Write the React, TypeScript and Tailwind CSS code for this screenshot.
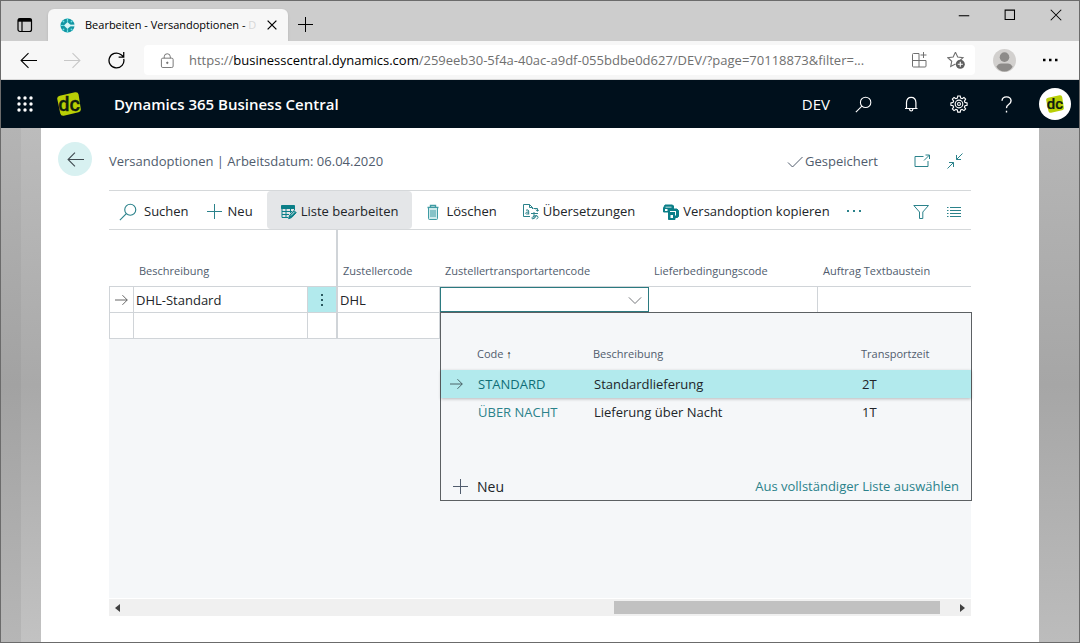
import React, {useState} from 'react';

type IconProps = {
    className?: string;
    size?: number;
    width?: number;
    children: React.ReactNode;
};

const Icon: React.FC<IconProps> = ({className = '', size = 16, width = 1, children}) => (
    <svg
        width={size}
        height={size}
        viewBox="0 0 16 16"
        fill="none"
        stroke="currentColor"
        strokeWidth={width}
        className={`shrink-0 ${className}`}
        aria-hidden="true"
    >
        {children}
    </svg>
);

const SearchIcon = ({className = '', size = 18}: {className?: string; size?: number}) => (
    <Icon className={className} size={size}>
        <circle cx="10" cy="6" r="4.9"/>
        <path d="M6.5 9.5 .8 15.2"/>
    </Icon>
);

const PlusIcon = ({className = '', size = 16}: {className?: string; size?: number}) => (
    <Icon className={className} size={size}>
        <path d="M7.5 0v15M0 7.5h15"/>
    </Icon>
);

const ArrowRight = ({className = ''}: {className?: string}) => (
    <Icon className={className} size={14}>
        <path d="M0 8h14M8.5 2.5 14 8l-5.5 5.5"/>
    </Icon>
);

const EditListIcon = () => (
    <Icon className="text-[#0b7f88]">
        <path d="M.5 1.500h13v3H.5z" fill="currentColor"/>
        <path d="M1 4v9.500h6M1 7.500h10M1 10.500h7M5 4v9.500M9.500 4v5M13.500 4v2"/>
        <path d="m8.500 11.500 4.500-5 2.200 2.200-4.600 4.900-3 1.100z" fill="currentColor"/>
        <path d="m10 11.500 3.500-3.700" stroke="white" strokeWidth=".8"/>
    </Icon>
);

const TrashIcon = () => (
    <Icon className="text-[#3f9ba3]">
        <path d="M1.500 3.500h11M4.500 3V1.500h5V3" strokeWidth="1.4"/>
        <path d="M2.500 4v10.500q0 1 1 1h7q1 0 1-1V4" fill="#cfeaec"/>
        <path d="M5 6v7M7 6v7M9 6v7"/>
    </Icon>
);

const TranslateIcon = () => (
    <Icon className="text-[#2b828b]">
        <path d="M7 12.500H.5V.5h6l3 3V5M6.500.5v3h3"/>
        <path d="M3 6.200q2.700-1 2.700.8v3.500M5.700 8q-3-.2-3 1.300 0 1.500 3 .4"/>
        <path d="M10.500 4.500h4V7M12.700 5.500 14.500 7.300 16 5.700"/>
        <path d="M8 9.500h7M11 8v6.500M13.500 11q-1.500 4-4 4-1.500-1 .5-2.500 2.500-1.500 4.500-.5 1.500 1.500-1 3.300"/>
    </Icon>
);

const CopyIcon = () => (
    <Icon className="text-[#0b7f88]">
        <path d="M2 1h7.500l1 1v3H6v3H.5V4l.5-1z" fill="currentColor"/>
        <path d="M2 5h2.500v2H2zM2.500 2.800h6v.8h-6z" fill="white" stroke="none"/>
        <path d="M5.500 6.500 6.500 5H14l1.500 1.500v6l-1 1H12v2H5.500z" fill="currentColor"/>
        <path d="M7.500 11H10v3H7.500zM7 7h6v1H7zM12 8h1v3.500h-1z" fill="white" stroke="none"/>
    </Icon>
);

const DcMark = ({size}: {size: number}) => (
    <svg width={size} height={size} viewBox="0 0 24 24" aria-hidden="true" className="shrink-0">
        <path d="M2.800 3.800 18 .3q3-.6 3.600 2.200l2.200 14.400q.4 2.800-2.300 3.400L6.800 23.700q-2.800.5-3.500-2.200L.2 6.800Q-.1 4.500 2.800 3.800Z" fill="#b9cf05"/>
        <text
            x="12"
            y="19"
            textAnchor="middle"
            fontSize="20"
            fill="#101d10"
            stroke="#101d10"
            strokeWidth=".3"
            className="font-['Roboto',sans-serif] font-medium"
        >
            dc
        </text>
    </svg>
);

const TabStrip = () => (
    <div className="flex h-10 items-end bg-[#cdcdcd] text-black">
        <button aria-label="Tab actions" className="flex h-8 w-[47px] items-center justify-center">
            <Icon size={16} width={1.2}>
                <rect x="1" y="1.500" width="13.500" height="13" rx="2"/>
                <path d="M1 3.200h13.500" strokeWidth="3"/>
                <path d="M5 4v10.500"/>
            </Icon>
        </button>
        <div className="flex h-8 w-60 items-center rounded-t-md bg-[#f7f7f7] pl-3 pr-2 shadow-sm">
            <svg width="15" height="15" viewBox="0 0 16 16" className="shrink-0" aria-hidden="true">
                <circle cx="8" cy="8" r="7.500" fill="#1496a3"/>
                <path d="M8 0v4M8 12v4M0 8h4M2.500 2.500l2 2M2.500 13.500l2-2M13.500 2.500l-2 2M13.500 13.500l-2-2" stroke="#6fe0e4" strokeWidth="1.300"/>
                <path d="M8 4.200 11.800 8 8 11.800 4.200 8z" fill="#d9f6f7"/>
                <path d="M8 8h8" stroke="#d9f6f7" strokeWidth="1.800"/>
            </svg>
            <span className="ml-2.5 min-w-0 flex-1 whitespace-nowrap text-[11px]">
                Bearbeiten - Versandoptionen - <span className="text-[#d8d8d8]">D</span>
            </span>
            <button aria-label="Close tab" className="ml-2 flex size-4 items-center justify-center">
                <Icon size={10} width={2}>
                    <path d="m1 1 14 14M15 1 1 15"/>
                </Icon>
            </button>
        </div>
        <button aria-label="New tab" className="flex h-8 w-9 items-center justify-center">
            <PlusIcon size={16}/>
        </button>
        <div className="ml-auto flex h-10 items-start pr-[17px] pt-2">
            <button aria-label="Minimize" className="flex w-[46px] justify-end">
                <Icon size={12} width={1.400}>
                    <path d="M1 9h14"/>
                </Icon>
            </button>
            <button aria-label="Maximize" className="flex w-[46px] justify-end">
                <Icon size={12} width={1.400}>
                    <path d="M1.500 1.500h12.500v12.500h-12.500z"/>
                </Icon>
            </button>
            <button aria-label="Close" className="flex w-[46px] justify-end">
                <Icon size={12} width={1.400}>
                    <path d="m1 1 14 14M15 1 1 15"/>
                </Icon>
            </button>
        </div>
    </div>
);

const AddressBar = () => (
    <div className="flex h-[39px] items-center border-b border-[#d8d8d8] bg-[#f7f7f7] text-black">
        <button aria-label="Back" className="flex w-[55px] justify-center">
            <Icon size={17}>
                <path d="M16 8H1M8 1 1 8l7 7"/>
            </Icon>
        </button>
        <button aria-label="Forward" className="flex w-8 justify-center text-[#c8c8c8]">
            <Icon size={17}>
                <path d="M0 8h15M8 1l7 7-7 7"/>
            </Icon>
        </button>
        <button aria-label="Refresh" className="flex w-14 justify-center">
            <Icon size={17} width={1.200}>
                <path d="M14.800 6.500A7 7 0 1 1 12 2.300l2.500 2M14.800 0v4.800H10"/>
            </Icon>
        </button>
        <div className="flex h-[30px] min-w-0 flex-1 items-center rounded bg-white pl-4 pr-2.5 text-[#707070]">
            <Icon size={15}>
                <rect x="1.500" y="5.500" width="12.500" height="10" rx="1.500"/>
                <path d="M4.500 5.500V4q0-3.200 3.200-3.200T11 4v1.500"/>
                <circle cx="7.800" cy="10.500" r=".8" fill="currentColor"/>
            </Icon>
            <span className="ml-3.5 min-w-0 flex-1 whitespace-nowrap pt-0.5 text-[13px]">
                https://<span className="text-black">businesscentral.dynamics.com</span>
                /259eeb30-5f4a-40ac-a9df-055bdbe0d627/DEV/?page=70118873&amp;filter=...
            </span>
            <button aria-label="Apps" className="ml-4">
                <Icon size={16}>
                    <path d="M8 1.500H2.500q-1 0-1 1V14q0 1 1 1H14q1 0 1-1V8.500H1.500M8 1.500V15M12.500 0v6M9.500 3h6"/>
                </Icon>
            </button>
            <button aria-label="Add to favourites" className="ml-5">
                <Icon size={18}>
                    <path d="m7.500 1 2 4.400 4.700.6-3.400 3.200M7.500 11.500l-4.200 2.300.9-4.700L.8 6l4.700-.6 2-4.400"/>
                    <circle cx="11.800" cy="11.800" r="4" fill="#5f5f5f" stroke="none"/>
                    <path d="M11.800 9.500v4.600M9.500 11.800h4.600" stroke="white"/>
                </Icon>
            </button>
        </div>
        <button aria-label="Profile" className="ml-[18px]">
            <svg width="23" height="23" viewBox="0 0 24 24" aria-hidden="true">
                <circle cx="12" cy="12" r="12" fill="#d2d0ce"/>
                <circle cx="12" cy="8.500" r="5" fill="#8d8b89"/>
                <path d="M3.500 18.500q2-3.500 5-3.500h7q3 0 5 3.500-3 5-8.500 5t-8.500-5z" fill="#8d8b89"/>
            </svg>
        </button>
        <button aria-label="Settings and more" className="ml-[26px] mr-[21px]">
            <Icon size={16}>
                <path d="M1 8h2.500M7 8h2.500M13 8h2.500" strokeWidth="2.400"/>
            </Icon>
        </button>
    </div>
);

const AppHeader = () => (
    <header className="flex h-12 items-center bg-[#00101c] text-white">
        <button aria-label="App launcher" className="flex w-[47px] justify-center">
            <svg width="16" height="16" viewBox="0 0 16 16" fill="white" aria-hidden="true">
                {[2, 8, 14].map((y) => [2, 8, 14].map((x) => (
                    <circle key={`${x}-${y}`} cx={x} cy={y} r="1.700"/>
                )))}
            </svg>
        </button>
        <div className="ml-[9px]">
            <DcMark size={24}/>
        </div>
        <h1 className="ml-[33px] text-[15px] font-semibold">Dynamics 365 Business Central</h1>
        <span className="ml-auto text-[15px]">DEV</span>
        <button aria-label="Search" className="ml-[25px]">
            <SearchIcon size={17}/>
        </button>
        <button aria-label="Notifications" className="ml-[31px]">
            <Icon size={16} width={1.200}>
                <path d="M2 12.500h12.500M3.500 12.500V6.500Q3.700 1.300 8.200 1.300t4.700 5.200v6M6.500 13q.2 2 1.700 2t1.700-2"/>
            </Icon>
        </button>
        <button aria-label="Settings" className="ml-[31px]">
            <Icon size={18}>
                <path d="M6.900.9h2.200l.4 1.900 1.300.5 1.600-1.100 1.500 1.500-1.100 1.700.5 1.200 1.900.4v2.100l-1.900.4-.5 1.300 1.100 1.600-1.500 1.500-1.600-1.100-1.300.5-.4 1.900H6.900l-.4-1.900-1.300-.5-1.600 1.100-1.500-1.500 1.100-1.600-.5-1.300-1.900-.4V7l1.900-.4.5-1.200-1.100-1.700 1.500-1.500 1.600 1.100 1.300-.5z"/>
                <circle cx="8" cy="8" r="3.400"/>
                <circle cx="8" cy="8" r="1.300"/>
            </Icon>
        </button>
        <button aria-label="Help" className="ml-[30px]">
            <Icon size={17} width={1.300}>
                <path d="M3.800 4.500Q4 .8 8 .8T12.300 4.500Q12.300 6.500 10 8T8 11.500M8 13.800v1.700"/>
            </Icon>
        </button>
        <button aria-label="Account" className="ml-6 mr-2 flex size-8 items-center justify-center rounded-full bg-white">
            <DcMark size={18}/>
        </button>
    </header>
);

const ActionBar = () => (
    <div className="flex h-10 items-stretch border-y border-[#d5d8da] text-[13px] text-[#212529] [&>button]:pt-[3px]">
        <button className="flex items-center gap-[7px] pl-2.5">
            <SearchIcon className="text-[#2b828b]"/>
            Suchen
        </button>
        <button className="ml-[18px] flex items-center gap-[5px]">
            <PlusIcon className="text-[#2b828b]"/>
            Neu
        </button>
        <button className="ml-3.5 flex items-center gap-1 rounded-sm bg-[#e4e6e8] px-3.5">
            <EditListIcon/>
            Liste bearbeiten
        </button>
        <button className="ml-3.5 flex items-center gap-1">
            <TrashIcon/>
            Löschen
        </button>
        <button className="ml-[26px] flex items-center gap-1">
            <TranslateIcon/>
            Übersetzungen
        </button>
        <button className="ml-7 flex items-center gap-1">
            <CopyIcon/>
            Versandoption kopieren
        </button>
        <button aria-label="More actions" className="ml-4 text-[#2b828b]">
            <Icon>
                <path d="M1 7h2M7 7h2M13 7h2" strokeWidth="1.800"/>
            </Icon>
        </button>
        <button aria-label="Filter" className="ml-auto text-[#2b828b]">
            <Icon>
                <path d="M.8 1.500h14.700L9.800 8v6.500H6.500V8z"/>
            </Icon>
        </button>
        <button aria-label="List view" className="ml-[17px] mr-[9px] text-[#2b828b]">
            <Icon>
                <path d="M1 3.500h1.500M4 3.500h11M1 6.500h1.500M4 6.500h11M1 9.500h1.500M4 9.500h11M1 12.500h1.500M4 12.500h11"/>
            </Icon>
        </button>
    </div>
);

const lookupRows = [
    {code: 'STANDARD', description: 'Standardlieferung', time: '2T'},
    {code: 'ÜBER NACHT', description: 'Lieferung über Nacht', time: '1T'},
];

const Lookup = ({onSelect}: {onSelect: (code: string) => void}) => (
    <div className="absolute left-0 top-[25px] z-10 h-[189px] w-[532px] border border-[#5c6063] bg-[#f5f7f9] text-[13px] text-[#212529]">
        <table className="w-full table-fixed border-separate border-spacing-0 text-left">
            <colgroup>
                <col className="w-8"/>
                <col className="w-[116px]"/>
                <col/>
                <col className="w-[114px]"/>
            </colgroup>
            <thead>
                <tr className="h-[57px] align-bottom text-[11px] text-[#505c6d] [&>th]:pb-2 [&>th]:pl-1 [&>th]:font-normal">
                    <th aria-label="Row"/>
                    <th>Code <span className="font-['Liberation_Sans',sans-serif] text-black">↑</span></th>
                    <th>Beschreibung</th>
                    <th>Transportzeit</th>
                </tr>
            </thead>
            <tbody>
                {lookupRows.map((row, index) => (
                    <tr
                        key={row.code}
                        onClick={() => onSelect(row.code)}
                        className={index === 0 ? 'h-7 bg-[#b2eaed] shadow-[0_1px_3px_rgba(0,0,0,0.25)]' : 'h-7'}
                    >
                        <td className="pl-[9px]">{index === 0 && <ArrowRight className="text-[#3c5055]"/>}</td>
                        <td className="pl-[5px] pt-0.5">
                            <a href="#" className={index === 0 ? 'text-[#0f6e78]' : 'text-[#2b828b]'}>{row.code}</a>
                        </td>
                        <td className="pl-[5px] pt-0.5">{row.description}</td>
                        <td className="pl-[5px] pt-0.5">{row.time}</td>
                    </tr>
                ))}
            </tbody>
        </table>
        <div className="mt-[49px] flex h-6 items-center justify-between px-3">
            <button className="flex items-center gap-2 text-sm">
                <PlusIcon className="text-[#505c6d]"/>
                Neu
            </button>
            <a href="#" className="text-[#2b828b]">Aus vollständiger Liste auswählen</a>
        </div>
    </div>
);

const ShippingTable = () => {
    const [transportCode, setTransportCode] = useState('');

    return (
        <table className="w-full table-fixed border-separate border-spacing-0 bg-white text-left text-[13px] text-[#212529]">
            <colgroup>
                <col className="w-[25px]"/>
                <col className="w-[174px]"/>
                <col className="w-[30px]"/>
                <col className="w-[102px]"/>
                <col className="w-[209px]"/>
                <col className="w-[169px]"/>
                <col/>
            </colgroup>
            <thead>
                <tr className="h-[57px] align-bottom text-[11px] text-[#505c6d] [&>th]:border-b [&>th]:border-[#d0d4d8] [&>th]:pb-[7px] [&>th]:pl-[5px] [&>th]:font-normal">
                    <th aria-label="Row"/>
                    <th>Beschreibung</th>
                    <th aria-label="Menu" className="border-r-2"/>
                    <th>Zustellercode</th>
                    <th>Zustellertransportartencode</th>
                    <th>Lieferbedingungscode</th>
                    <th>Auftrag Textbaustein</th>
                </tr>
            </thead>
            <tbody className="[&_td]:border-[#d0d4d8]">
                <tr className="h-[26px]">
                    <td className="border-x border-b pl-[5px]"><ArrowRight className="text-[#505050]"/></td>
                    <td className="border-b border-r pl-0.5 pt-0.5">DHL-Standard</td>
                    <td className="border-b border-r-2 bg-[#b2eaed]">
                        <button aria-label="Row menu" className="flex w-full justify-center text-[#2b5a60]">
                            <Icon>
                                <path d="M8 2v2M8 7v2M8 12v2" strokeWidth="2"/>
                            </Icon>
                        </button>
                    </td>
                    <td className="border-b border-r pl-0.5 pt-0.5">DHL</td>
                    <td className="relative align-top">
                        <div className="flex h-[25px] items-center border border-[#2b7a80] bg-white pr-1.5">
                            <input
                                type="text"
                                aria-label="Zustellertransportartencode"
                                value={transportCode}
                                onChange={(e) => setTransportCode(e.target.value)}
                                className="min-w-0 flex-1 px-1 outline-none"
                            />
                            <button aria-label="Open list" className="text-[#606468]">
                                <Icon size={14}>
                                    <path d="m1 5 7 7 7-7"/>
                                </Icon>
                            </button>
                        </div>
                        <Lookup onSelect={setTransportCode}/>
                    </td>
                    <td className="border-b border-r"/>
                    <td className="border-b"/>
                </tr>
                <tr className="h-[26px]">
                    <td className="border-x border-b"/>
                    <td className="border-b border-r"/>
                    <td className="border-b border-r-2"/>
                    <td className="border-b border-r"/>
                    <td className="border-b border-r"/>
                    <td className="border-b border-r"/>
                    <td className="border-b"/>
                </tr>
            </tbody>
        </table>
    );
};

const ScrollBar = () => (
    <div className="mt-px flex h-[17px] items-center bg-[#f0f0f0] text-[#404040]">
        <button aria-label="Scroll left" className="flex w-[17px] justify-center">
            <svg width="5" height="8" viewBox="0 0 5 8" aria-hidden="true"><path d="M5 0v8L0 4z" fill="currentColor"/></svg>
        </button>
        <div className="flex flex-1 justify-end pr-3.5">
            <div className="h-[13px] w-2/5 bg-[#c1c1c1]"/>
        </div>
        <button aria-label="Scroll right" className="flex w-[17px] justify-center">
            <svg width="5" height="8" viewBox="0 0 5 8" aria-hidden="true"><path d="M0 0v8l5-4z" fill="currentColor"/></svg>
        </button>
    </div>
);

const App: React.FC = () => (
    <div className="flex min-h-screen flex-col border border-[#6b6b6b] font-['Open_Sans','Noto_Sans',sans-serif]">
        <TabStrip/>
        <AddressBar/>
        <AppHeader/>
        <div className="flex flex-1">
            <div className="w-5 bg-linear-to-b from-[#b4b4b4] via-[#a2a2a2] to-[#b6b6b6]"/>
            <div className="w-5 bg-linear-to-b from-[#bcbcbc] via-[#a9a9a9] to-[#c2c2c2]"/>
            <main className="flex min-w-0 flex-1 flex-col bg-white pb-[26px] pr-[68px]">
                <div className="flex h-[62px] items-center pl-[17px] text-[13px] text-[#505c6d]">
                    <button aria-label="Back" className="flex size-[34px] items-center justify-center rounded-full bg-[#d8f1f1] text-[#404a50]">
                        <Icon size={17}>
                            <path d="M16 8H1M7.500 1.500 1 8l6.500 6.500"/>
                        </Icon>
                    </button>
                    <h2 className="ml-[17px] pt-[5px]">Versandoptionen | Arbeitsdatum: 06.04.2020</h2>
                    <span className="ml-auto flex items-center gap-0.5 pt-[5px]">
                        <Icon>
                            <path d="m1 8.500 4.500 4.500L15.500 3"/>
                        </Icon>
                        Gespeichert
                    </span>
                    <button aria-label="Open in new window" className="ml-9 pt-1 text-[#2b828b]">
                        <Icon>
                            <path d="M9.500 3.500H1v10h13V8M10 7.500l5.500-5.500M11.500 2h4v4"/>
                        </Icon>
                    </button>
                    <button aria-label="Collapse" className="ml-[17px] mr-2 pt-1 text-[#2b828b]">
                        <Icon>
                            <path d="M15.500.5 9.500 6.500M9.500 2v4.500H14M.5 15.500l6-6M2 9.500h4.500V14"/>
                        </Icon>
                    </button>
                </div>
                <div className="flex flex-1 flex-col pl-[68px]">
                    <ActionBar/>
                    <div className="flex-1 bg-[#f5f7f9]">
                        <ShippingTable/>
                    </div>
                    <ScrollBar/>
                </div>
            </main>
            <div className="w-10 bg-linear-to-b from-[#b6b6b6] via-[#a6a6a6] to-[#bcbcbc]"/>
        </div>
    </div>
);

export default App;
